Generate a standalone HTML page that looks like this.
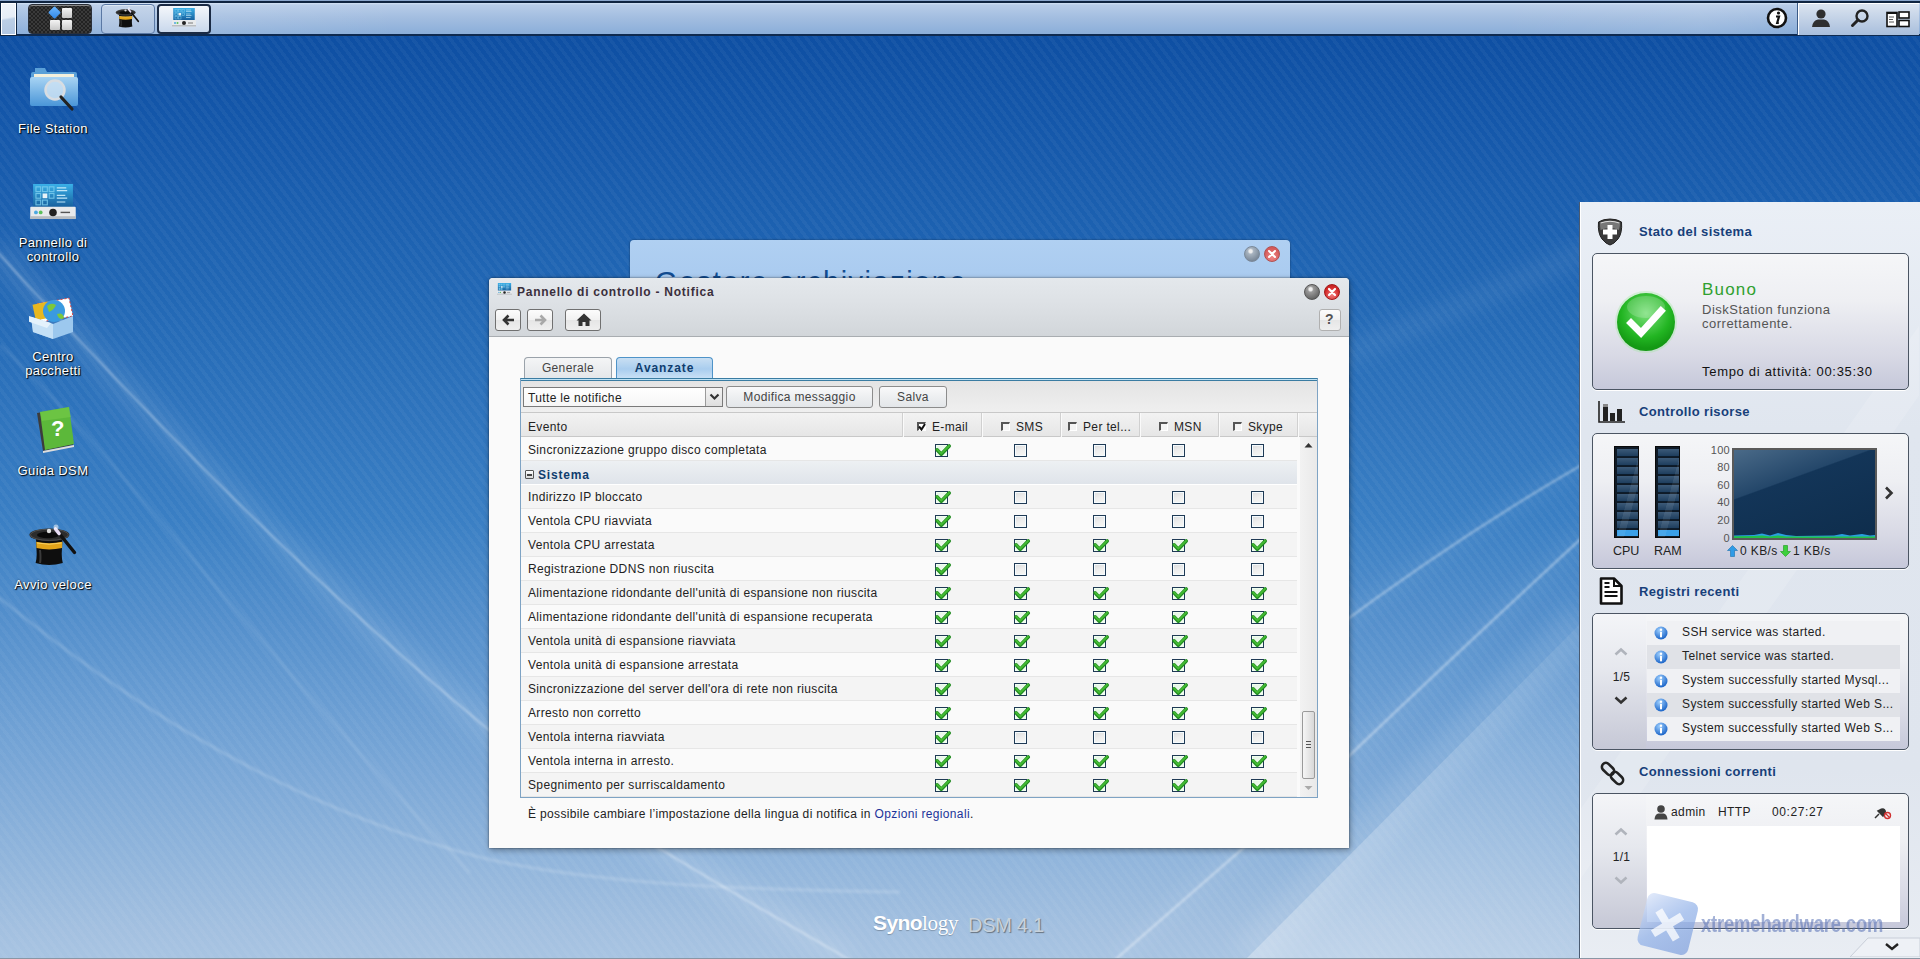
<!DOCTYPE html><html><head><meta charset="utf-8"><style>
*{box-sizing:border-box;margin:0;padding:0}
html,body{width:1920px;height:959px;overflow:hidden}
body{position:relative;font-family:"Liberation Sans",sans-serif;font-size:12px;color:#222;letter-spacing:.35px;
background:linear-gradient(180deg,#0e4fa3 36px,#1457aa 120px,#2268b5 300px,#3a7fc4 520px,#6b9ed3 710px,#a3c0e0 930px,#a8c4e2 959px);}
.a{position:absolute}
.t{position:absolute;white-space:nowrap;line-height:14px}
#stripes{position:absolute;left:0;top:0;width:1920px;height:959px;
background:repeating-linear-gradient(53deg,rgba(255,255,255,0) 0 4px,rgba(255,255,255,.04) 4px 7.5px);}
#topbar{position:absolute;left:0;top:0;width:1920px;height:36px;
background:linear-gradient(180deg,#8aa6cc 0,#8aa6cc 1px,#0f2440 1px,#0f2440 3px,#d2e1f4 3px,#b7cce8 5px,#a2bde0 18px,#8aaed9 34px,#0e2a50 34px,#0e2a50 36px)}
#tbshine{position:absolute;left:0;top:3px;width:1920px;height:31px;background:linear-gradient(90deg,rgba(255,255,255,0) 0,rgba(255,255,255,.12) 150px,rgba(255,255,255,0) 400px,rgba(255,255,255,0) 1500px,rgba(255,255,255,.08) 1700px,rgba(255,255,255,0) 1797px)}
.dlbl{position:absolute;width:120px;text-align:center;color:#fff;font-size:13px;line-height:14px;letter-spacing:.4px;text-shadow:1px 1px 1px #000,0 0 2px rgba(0,0,0,.6)}
.tb{position:absolute;top:31px;height:22px;border:1px solid #707070;border-radius:3px;background:linear-gradient(180deg,#fcfcfc 0%,#f1f1f1 50%,#e6e6e6 52%,#efefef 100%)}
.sbtn{position:absolute;top:5px;height:22px;border:1px solid #8c8c8c;border-radius:3px;background:linear-gradient(180deg,#f9f9fa 0%,#eceef0 55%,#e3e6e9 100%);text-align:center;color:#444;line-height:21px}
.row{position:absolute;left:0;width:776px;height:24px;border-bottom:1px solid #e6e6e6}
.r0{background:#f4f4f4}.r1{background:#fafafa}
.cb{position:absolute;top:6px;width:13px;height:13px;border:1px solid #1f3a55;box-shadow:inset 0 0 0 1px #f4fbff;background:linear-gradient(160deg,#dcdcdc,#eeeeee 50%,#f8f8f4)}
.ck{position:absolute;top:6px;width:13px;height:13px;border:1px solid #1f3a55;box-shadow:inset 0 0 0 1px #f0fff0;background:linear-gradient(160deg,#e4f4e4,#f6fff6)}
.ck svg{position:absolute;left:-1px;top:-1px;overflow:visible}
.hs{position:absolute;top:0;width:1px;height:24px;background:#d0d0d0;box-shadow:1px 0 0 #fafafa}
</style></head><body>
<div id="stripes"></div>
<div id="topbar">
<div id="tbshine"></div>
<div class="a" style="left:0;top:2px;width:17px;height:34px;border:1px solid #0f2440;background:#fff;padding:1px"><div style="width:100%;height:100%;background:linear-gradient(170deg,#eef3f9 0,#e6edf6 45%,#bccfe6 52%,#b0c6e2 100%)"></div></div>
</div>
<svg class="a" style="left:0;top:0" width="1920" height="959"><defs><linearGradient id="wedge" x1="0" y1="1" x2="1" y2="0"><stop offset="0" stop-color="#fff" stop-opacity=".30"/><stop offset=".55" stop-color="#fff" stop-opacity=".18"/><stop offset="1" stop-color="#fff" stop-opacity=".06"/></linearGradient><filter id="bl1" x="-10%" y="-10%" width="120%" height="120%"><feGaussianBlur stdDeviation="0.8"/></filter><filter id="bl6" x="-10%" y="-10%" width="120%" height="120%"><feGaussianBlur stdDeviation="10"/></filter></defs><path d="M-5 249.5 C 132 399, 296 570, 483 725 C 560 790, 640 840, 850 960" fill="none" stroke="#fff" stroke-opacity=".10" stroke-width="26" filter="url(#bl6)"/><path d="M-5 249.5 C 132 399, 296 570, 483 725 C 560 790, 640 840, 850 960" fill="none" stroke="#fff" stroke-opacity=".30" stroke-width="2.5" filter="url(#bl1)"/><path d="M-5 594 C 100 680, 260 800, 483 858 C 600 885, 750 890, 900 892" fill="none" stroke="#fff" stroke-opacity=".15" stroke-width="3.5" filter="url(#bl1)"/><path d="M0 345 C 108 445, 256 648, 470 873" fill="none" stroke="#fff" stroke-opacity=".08" stroke-width="4" filter="url(#bl1)"/><path d="M1246 959 L1585 619 L1585 959 Z" fill="url(#wedge)"/><path d="M1116 959 L1350 755 Q 1460 650, 1585 535" fill="none" stroke="#fff" stroke-opacity=".10" stroke-width="9" filter="url(#bl6)"/><path d="M1116 959 L1350 755 Q 1460 650, 1585 535" fill="none" stroke="#fff" stroke-opacity=".36" stroke-width="2.5" filter="url(#bl1)"/><path d="M1330 632 Q 1460 535, 1585 463" fill="none" stroke="#fff" stroke-opacity=".10" stroke-width="9" filter="url(#bl6)"/><path d="M1330 632 Q 1460 535, 1585 463" fill="none" stroke="#fff" stroke-opacity=".34" stroke-width="2.5" filter="url(#bl1)"/><path d="M1246 959 L1585 619" fill="none" stroke="#fff" stroke-opacity=".10" stroke-width="40" filter="url(#bl6)"/><path d="M1330 362 L1590 250" fill="none" stroke="#fff" stroke-opacity=".07" stroke-width="18" filter="url(#bl6)"/></svg>
<div class="a" style="left:28px;top:4px;width:64px;height:30px;border:1px solid #2a2f38;border-radius:4px;background:repeating-conic-gradient(#3a3a3a 0 25%,#222 0 50%) 0 0/4px 4px;box-shadow:inset 0 1px 0 #888"></div>
<div class="a" style="left:50px;top:8px;width:9px;height:9px;transform:rotate(45deg);background:linear-gradient(135deg,#6fb8ff,#2f86e6);border-radius:1px;left:50px;top:8px"></div>
<div class="a" style="left:62px;top:8px;width:10px;height:10px;border-radius:1px;background:linear-gradient(180deg,#f4f4f4,#c8c8c8)"></div>
<div class="a" style="left:50px;top:20px;width:10px;height:10px;border-radius:1px;background:linear-gradient(180deg,#f4f4f4,#c8c8c8)"></div>
<div class="a" style="left:62px;top:20px;width:10px;height:10px;border-radius:1px;background:linear-gradient(180deg,#f4f4f4,#c8c8c8)"></div>
<svg width="0" height="0" class="a"><defs><linearGradient id="cpg" x1="0" y1="0" x2="0" y2="1"><stop offset="0" stop-color="#3ab0e8"/><stop offset="1" stop-color="#145a98"/></linearGradient></defs></svg>
<div class="a" style="left:101px;top:4px;width:54px;height:30px;border:1px solid #5a78a4;border-radius:4px;background:linear-gradient(180deg,#c5d5ea,#a9c0df);box-shadow:inset 0 1px 0 #dde8f4"></div>
<svg class="a" style="left:115px;top:6px" width="25" height="22" viewBox="0 0 50 44"><path d="M8 17 L34.5 17 L33.8 30 Q33.5 36 34.8 41 Q21 45 7.6 41 Q9 36 8.6 30 Z" fill="#0e0e0e"/><path d="M12 28 Q13 36 12 41" stroke="#3a3a3a" stroke-width="2" fill="none"/><path d="M8.2 19.8 Q21 22.6 34.4 19.8 L34.1 26 Q21 28.8 8.5 26Z" fill="#e2a41a"/><path d="M9 21 Q21 23.5 33.5 21" stroke="#f8d060" stroke-width="1" fill="none"/><ellipse cx="21.4" cy="12.8" rx="20" ry="6.4" fill="#2c2c2c"/><ellipse cx="21.4" cy="12.8" rx="19" ry="5.6" fill="none" stroke="#555" stroke-width=".8"/><ellipse cx="20" cy="13" rx="11" ry="3.2" fill="#0a0a0a"/><path d="M28 7.5 L46.5 30.5" stroke="#111" stroke-width="3.4" stroke-linecap="round"/><path d="M27.5 7 L31 11.5" stroke="#e8dcf4" stroke-width="3.6" stroke-linecap="round"/><circle cx="21" cy="9" r="2.2" fill="#fff" opacity=".85"/><circle cx="28" cy="5" r="2.5" fill="#fff" opacity=".5"/></svg>
<div class="a" style="left:157px;top:4px;width:54px;height:30px;border:2px solid #1a2a44;border-radius:4px;background:linear-gradient(180deg,#f4f7fb,#c9d8ec)"></div>
<svg class="a" style="left:172px;top:8px" width="24" height="19" viewBox="0 0 48 38"><rect x="3" y="0" width="42" height="26" fill="#1f7ec0"/><rect x="3" y="0" width="42" height="26" fill="url(#cpg)"/><g fill="none" stroke="#7fd0f0" stroke-width="1.2" opacity=".8"><rect x="6" y="3" width="5" height="5"/><rect x="13" y="3" width="5" height="5"/><rect x="20" y="3" width="5" height="5"/><rect x="6" y="10" width="5" height="5"/><rect x="20" y="10" width="5" height="5"/><rect x="6" y="17" width="5" height="5"/><rect x="13" y="17" width="5" height="5"/></g><rect x="13" y="10" width="5" height="5" fill="#e8f4f8"/><g stroke="#bfe6f8" stroke-width="1.3"><path d="M28 4h10M28 7h11M28 12h9M28 15h11M28 19h9"/></g><rect x="0" y="24" width="48" height="13" rx="1" fill="#e8eaec"/><rect x="0" y="34" width="48" height="3" fill="#b8bcc0"/><circle cx="6" cy="30" r="2" fill="#4aa8e0"/><circle cx="11" cy="30" r="2" fill="#5cc05c"/><circle cx="24" cy="30" r="4" fill="#222"/><path d="M32 30h10" stroke="#555" stroke-width="1.5"/></svg>
<div class="a" style="left:1797px;top:3px;width:1px;height:32px;background:#3a5a86"></div>
<div class="a" style="left:1798px;top:3px;width:121px;height:32px;border-top:1px solid #fff;border-left:1px solid #fff;background:linear-gradient(180deg,#dbe4f0,#a8bedc)"></div>
<svg class="a" style="left:1766px;top:7px" width="22" height="22"><circle cx="11" cy="11" r="9" fill="#fff" stroke="#111" stroke-width="2.6"/><circle cx="12.5" cy="6" r="1.6" fill="#111"/><path d="M10 9.5h3l-1.8 6.5h1.6" fill="none" stroke="#111" stroke-width="2.2"/></svg>
<svg class="a" style="left:1811px;top:8px" width="20" height="20"><circle cx="10" cy="6" r="4.6" fill="#2f2f2f"/><path d="M1 19 Q2 12 7 11.5 L13 11.5 Q18 12 19 19Z" fill="#2f2f2f"/></svg>
<svg class="a" style="left:1850px;top:8px" width="20" height="20"><circle cx="12" cy="8" r="5.5" fill="none" stroke="#222" stroke-width="2.4"/><path d="M8 12L2.5 17.5" stroke="#222" stroke-width="3" stroke-linecap="round"/></svg>
<svg class="a" style="left:1886px;top:11px" width="24" height="17"><rect x="1" y="1.5" width="10" height="14" fill="#fff" stroke="#111" stroke-width="1.6"/><rect x="1" y="1" width="10" height="2" fill="#111"/><path d="M3 6h5M3 8.5h4M3 11h5" stroke="#555"/><rect x="13" y="1" width="10" height="6" fill="#fff" stroke="#111" stroke-width="1.6"/><rect x="13" y="9.5" width="10" height="6" fill="#fff" stroke="#111" stroke-width="1.6"/></svg>
<svg class="a" style="left:29px;top:66px" width="52" height="46" viewBox="0 0 52 46"><defs><linearGradient id="fold" x1="0" y1="0" x2="0" y2="1"><stop offset="0" stop-color="#a8d4f4"/><stop offset="1" stop-color="#4a96d8"/></linearGradient></defs><path d="M6 2h10l2 4h-12z" fill="#5aa0d8"/><rect x="2" y="6" width="46" height="10" rx="2" fill="#5aa0d8"/><rect x="5" y="8" width="40" height="6" fill="#f4f0dc"/><rect x="1" y="11" width="48" height="29" rx="2" fill="url(#fold)"/><circle cx="26" cy="24" r="9.5" fill="#cfe4f4" fill-opacity=".8" stroke="#d8dde2" stroke-width="2.5"/><path d="M32 31L43 43" stroke="#222" stroke-width="3.2" stroke-linecap="round"/></svg>
<div class="dlbl" style="left:-7px;top:122px">File Station</div>
<svg class="a" style="left:30px;top:184px" width="46" height="36" viewBox="0 0 48 38"><rect x="3" y="0" width="42" height="26" fill="#1f7ec0"/><rect x="3" y="0" width="42" height="26" fill="url(#cpg)"/><g fill="none" stroke="#7fd0f0" stroke-width="1.2" opacity=".8"><rect x="6" y="3" width="5" height="5"/><rect x="13" y="3" width="5" height="5"/><rect x="20" y="3" width="5" height="5"/><rect x="6" y="10" width="5" height="5"/><rect x="20" y="10" width="5" height="5"/><rect x="6" y="17" width="5" height="5"/><rect x="13" y="17" width="5" height="5"/></g><rect x="13" y="10" width="5" height="5" fill="#e8f4f8"/><g stroke="#bfe6f8" stroke-width="1.3"><path d="M28 4h10M28 7h11M28 12h9M28 15h11M28 19h9"/></g><rect x="0" y="24" width="48" height="13" rx="1" fill="#e8eaec"/><rect x="0" y="34" width="48" height="3" fill="#b8bcc0"/><circle cx="6" cy="30" r="2" fill="#4aa8e0"/><circle cx="11" cy="30" r="2" fill="#5cc05c"/><circle cx="24" cy="30" r="4" fill="#222"/><path d="M32 30h10" stroke="#555" stroke-width="1.5"/></svg>
<div class="dlbl" style="left:-7px;top:236px">Pannello di<br>controllo</div>
<svg class="a" style="left:29px;top:294px" width="48" height="46" viewBox="0 0 48 46"><path d="M8 10 L40 4 L44 22 L12 28Z" fill="#fff" stroke="#d44" stroke-width="1" stroke-dasharray="2 2"/><rect x="5" y="9" width="16" height="16" fill="#e8b820" transform="rotate(-12 13 17)"/><circle cx="25" cy="17" r="11" fill="#3a9ae0"/><path d="M18 12 Q22 8 27 11 Q25 16 20 18Z M28 20 Q34 18 35 24 Q30 27 28 20Z" fill="#7cc83c"/><path d="M2 23 L24 30 L44 22 L44 38 L24 45 L4 38Z" fill="#9cc8ee"/><path d="M2 23 L24 30 L24 45 L4 38Z" fill="#c4e0f6"/><path d="M0 22 L22 29 L18 34 L-2 27Z" fill="#e4f2fc"/></svg>
<div class="dlbl" style="left:-7px;top:350px">Centro<br>pacchetti</div>
<svg class="a" style="left:31px;top:407px" width="44" height="48" viewBox="0 0 44 48"><path d="M6 6 L36 1 L42 38 L12 44Z" fill="#3c3c3c"/><path d="M9 5 L38 0 L43 37 L14 43Z" fill="#5cb83a"/><path d="M9 5 L38 0 L40 10 L11 14Z" fill="#7cd04c" opacity=".5"/><path d="M12 44 L43 38 L43 40 L12 46Z" fill="#ddd"/><text x="27" y="29" font-family="Liberation Sans" font-weight="bold" font-size="22" fill="#fff" text-anchor="middle">?</text></svg>
<div class="dlbl" style="left:-7px;top:464px">Guida DSM</div>
<svg class="a" style="left:28px;top:522px" width="50" height="44" viewBox="0 0 50 44"><path d="M8 17 L34.5 17 L33.8 30 Q33.5 36 34.8 41 Q21 45 7.6 41 Q9 36 8.6 30 Z" fill="#0e0e0e"/><path d="M12 28 Q13 36 12 41" stroke="#3a3a3a" stroke-width="2" fill="none"/><path d="M8.2 19.8 Q21 22.6 34.4 19.8 L34.1 26 Q21 28.8 8.5 26Z" fill="#e2a41a"/><path d="M9 21 Q21 23.5 33.5 21" stroke="#f8d060" stroke-width="1" fill="none"/><ellipse cx="21.4" cy="12.8" rx="20" ry="6.4" fill="#2c2c2c"/><ellipse cx="21.4" cy="12.8" rx="19" ry="5.6" fill="none" stroke="#555" stroke-width=".8"/><ellipse cx="20" cy="13" rx="11" ry="3.2" fill="#0a0a0a"/><path d="M28 7.5 L46.5 30.5" stroke="#111" stroke-width="3.4" stroke-linecap="round"/><path d="M27.5 7 L31 11.5" stroke="#e8dcf4" stroke-width="3.6" stroke-linecap="round"/><circle cx="21" cy="9" r="2.2" fill="#fff" opacity=".85"/><circle cx="28" cy="5" r="2.5" fill="#fff" opacity=".5"/></svg>
<div class="dlbl" style="left:-7px;top:578px">Avvio veloce</div>
<div class="a" style="left:630px;top:240px;width:660px;height:60px;border-radius:4px 4px 0 0;background:linear-gradient(180deg,#b0d0f2,#a6c8ee);box-shadow:0 0 2px rgba(0,0,0,.5);overflow:hidden"><div class="t" style="left:25px;top:26px;font-size:29px;line-height:32px;color:#124c90;letter-spacing:1.5px">Gestore archiviazione</div><div class="a" style="left:614px;top:6px;width:16px;height:16px;border-radius:50%;background:radial-gradient(circle at 40% 30%,#eee 0 1.5px,#a8b4c0 3px,#7a8898 75%);border:1px solid #7a8898"></div><div class="a" style="left:634px;top:6px;width:16px;height:16px;border-radius:50%;background:radial-gradient(circle at 50% 70%,#e88,#d45a5a 70%);border:1px solid #b05050"></div><svg class="a" style="left:634px;top:6px" width="16" height="16"><path d="M5 5L11 11M11 5L5 11" stroke="#fff" stroke-width="2" stroke-linecap="round"/></svg></div>
<div class="a" style="left:489px;top:278px;width:860px;height:570px;border-radius:4px 4px 0 0;background:#fafafa;box-shadow:0 0 2px rgba(0,0,0,.6),1px 2px 6px rgba(0,0,0,.35)">
<div class="a" style="left:0;top:0;width:860px;height:59px;border-radius:4px 4px 0 0;background:linear-gradient(180deg,#e4e8ec 0%,#dde1e5 45%,#d2d6da 100%);border-bottom:1px solid #a9adb1"></div>
<svg class="a" style="left:8px;top:5px" width="15" height="12" viewBox="0 0 48 38"><rect x="3" y="0" width="42" height="26" fill="#1f7ec0"/><rect x="3" y="0" width="42" height="26" fill="url(#cpg)"/><g fill="none" stroke="#7fd0f0" stroke-width="1.2" opacity=".8"><rect x="6" y="3" width="5" height="5"/><rect x="13" y="3" width="5" height="5"/><rect x="20" y="3" width="5" height="5"/><rect x="6" y="10" width="5" height="5"/><rect x="20" y="10" width="5" height="5"/><rect x="6" y="17" width="5" height="5"/><rect x="13" y="17" width="5" height="5"/></g><rect x="13" y="10" width="5" height="5" fill="#e8f4f8"/><g stroke="#bfe6f8" stroke-width="1.3"><path d="M28 4h10M28 7h11M28 12h9M28 15h11M28 19h9"/></g><rect x="0" y="24" width="48" height="13" rx="1" fill="#e8eaec"/><rect x="0" y="34" width="48" height="3" fill="#b8bcc0"/><circle cx="6" cy="30" r="2" fill="#4aa8e0"/><circle cx="11" cy="30" r="2" fill="#5cc05c"/><circle cx="24" cy="30" r="4" fill="#222"/><path d="M32 30h10" stroke="#555" stroke-width="1.5"/></svg>
<div class="t" style="left:28px;top:7px;font-weight:bold;color:#3a2f3c;letter-spacing:.75px">Pannello di controllo - Notifica</div>
<div class="a" style="left:815px;top:6px;width:16px;height:16px;border-radius:50%;background:radial-gradient(circle at 40% 30%,#eee 0 1.5px,#9a9a9a 3px,#6b6b6b 70%,#444 100%);border:1px solid #555"></div>
<div class="a" style="left:835px;top:6px;width:16px;height:16px;border-radius:50%;background:radial-gradient(circle at 50% 70%,#f08080,#d42a2a 60%,#b81c1c);border:1px solid #a31818"></div>
<svg class="a" style="left:835px;top:6px" width="16" height="16"><path d="M5 5L11 11M11 5L5 11" stroke="#fff" stroke-width="2.2" stroke-linecap="round"/></svg>
<div class="tb" style="left:6px;width:26px"><svg class="a" style="left:5px;top:4px" width="14" height="12"><path d="M13 6H3M7.5 1.5L3 6L7.5 10.5" fill="none" stroke="#333" stroke-width="2.6"/></svg></div>
<div class="tb" style="left:38px;width:26px"><svg class="a" style="left:6px;top:4px" width="14" height="12"><path d="M1 6H11M6.5 1.5L11 6L6.5 10.5" fill="none" stroke="#a8a8a8" stroke-width="2.6"/></svg></div>
<div class="tb" style="left:76px;width:36px"><svg class="a" style="left:10px;top:3px" width="16" height="14"><path d="M8 0.5L0.5 7.5H2.5V13H6.5V9H9.5V13H13.5V7.5H15.5Z" fill="#333"/></svg></div>
<div class="tb" style="left:830px;width:22px;border-color:#b0b0b0"><div class="t" style="left:5px;top:2px;font-weight:bold;font-size:14px;color:#555">?</div></div>
<div class="a" style="left:35px;top:79px;width:88px;height:22px;border:1px solid #9aa2aa;border-bottom:none;border-radius:4px 4px 0 0;background:linear-gradient(180deg,#f4f5f6,#e3e6e9)"><div class="t" style="left:0;width:86px;text-align:center;top:3px;color:#444">Generale</div></div>
<div class="a" style="left:127px;top:79px;width:97px;height:23px;border:1px solid #4e93c8;border-bottom:none;border-radius:4px 4px 0 0;background:linear-gradient(180deg,#c9dff3 0%,#a9cdee 50%,#cfe4f7 100%)"><div class="t" style="left:0;width:95px;text-align:center;top:3px;color:#0f3d6e;font-weight:bold;letter-spacing:.9px">Avanzate</div></div>
<div class="a" style="left:31px;top:100px;width:798px;height:420px;border:1px solid #7ea3c4;border-top:1px solid #3a7ca2;background:#fafafa;box-shadow:inset 1px 0 0 #e4f2fb,inset -1px 0 0 #e4f2fb">
<div class="a" style="left:0;top:0;width:796px;height:2px;background:linear-gradient(180deg,#bfe3f6 0,#bfe3f6 1px,#3a7ca2 1px)"></div>
<div class="a" style="left:0;top:2px;width:796px;height:32px;background:linear-gradient(180deg,#e4e4e4,#efefef);border-bottom:1px solid #c8c8c8">
<div class="a" style="left:2px;top:6px;width:200px;height:20px;border:1px solid #7a7a7a;background:linear-gradient(180deg,#fff,#f6f6f6)"><div class="t" style="left:4px;top:3px;color:#222">Tutte le notifiche</div><div class="a" style="left:181px;top:0;width:17px;height:18px;border-left:1px solid #9a9a9a;background:linear-gradient(180deg,#f4f4f4,#dedede)"><svg class="a" style="left:3px;top:5px" width="11" height="8"><path d="M1.5 1.5L5.5 5.5L9.5 1.5" fill="none" stroke="#333" stroke-width="2.2"/></svg></div></div>
<div class="sbtn" style="left:205px;width:147px">Modifica messaggio</div>
<div class="sbtn" style="left:358px;width:68px">Salva</div>
</div>
<div class="a" style="left:0;top:34px;width:796px;height:24px;background:linear-gradient(180deg,#f2f2f2,#e6e6e6);border-bottom:1px solid #c8c8c8">
<div class="t" style="left:7px;top:6.5px;color:#222">Evento</div>
<div class="hs" style="left:381px"></div>
<div class="a" style="left:396px;top:9px;width:9px;height:9px;border-left:2px solid #555;border-top:2px solid #555;border-right:1px solid #fff;border-bottom:1px solid #fff;background:#fff"></div>
<svg class="a" style="left:397px;top:10px" width="8" height="8"><path d="M1 3.5L3.5 6.5L7 1" fill="none" stroke="#111" stroke-width="2"/></svg>
<div class="t" style="left:411px;top:6.5px;color:#222">E-mail</div>
<div class="hs" style="left:460px"></div>
<div class="a" style="left:480px;top:9px;width:9px;height:9px;border-left:2px solid #555;border-top:2px solid #555;border-right:1px solid #fff;border-bottom:1px solid #fff;background:#f4f4f4"></div>
<div class="t" style="left:495px;top:6.5px;color:#222">SMS</div>
<div class="hs" style="left:539px"></div>
<div class="a" style="left:547px;top:9px;width:9px;height:9px;border-left:2px solid #555;border-top:2px solid #555;border-right:1px solid #fff;border-bottom:1px solid #fff;background:#f4f4f4"></div>
<div class="t" style="left:562px;top:6.5px;color:#222">Per tel...</div>
<div class="hs" style="left:618px"></div>
<div class="a" style="left:638px;top:9px;width:9px;height:9px;border-left:2px solid #555;border-top:2px solid #555;border-right:1px solid #fff;border-bottom:1px solid #fff;background:#f4f4f4"></div>
<div class="t" style="left:653px;top:6.5px;color:#222">MSN</div>
<div class="hs" style="left:697px"></div>
<div class="a" style="left:712px;top:9px;width:9px;height:9px;border-left:2px solid #555;border-top:2px solid #555;border-right:1px solid #fff;border-bottom:1px solid #fff;background:#f4f4f4"></div>
<div class="t" style="left:727px;top:6.5px;color:#222">Skype</div>
<div class="hs" style="left:776px"></div>
</div>
<div class="a" style="left:0;top:58px;width:796px;height:360px;overflow:hidden">
<div class="row r1" style="top:0px"><div class="t" style="left:7px;top:5.5px">Sincronizzazione gruppo disco completata</div>
<div class="ck" style="left:414px;top:7px"><svg width="16" height="13" viewBox="0 0 16 13"><path d="M2 5.8 L6.3 10.2 L14.2 2" fill="none" stroke="#1f8a1f" stroke-width="3.6" stroke-linecap="round" stroke-linejoin="round"/><path d="M2.3 5.6 L6.3 9.6 L14 1.9" fill="none" stroke="#44bb33" stroke-width="2" stroke-linecap="round" stroke-linejoin="round"/></svg></div>
<div class="cb" style="left:493px;top:7px"></div>
<div class="cb" style="left:572px;top:7px"></div>
<div class="cb" style="left:651px;top:7px"></div>
<div class="cb" style="left:730px;top:7px"></div>
</div>
<div class="row" style="top:24px;background:linear-gradient(180deg,#edf0f3,#dfe4ea);border-bottom:1px solid #fff"><div class="a" style="left:4px;top:9px;width:9px;height:9px;border:1px solid #555;border-radius:1px;background:linear-gradient(180deg,#fff,#d8d8d8)"><div class="a" style="left:1px;top:3px;width:5px;height:2px;background:#444"></div></div><div class="t" style="left:17px;top:6.5px;font-weight:bold;color:#0f3d6e;letter-spacing:.8px">Sistema</div></div>
<div class="row r0" style="top:48px"><div class="t" style="left:7px;top:4.5px">Indirizzo IP bloccato</div>
<div class="ck" style="left:414px;top:6px"><svg width="16" height="13" viewBox="0 0 16 13"><path d="M2 5.8 L6.3 10.2 L14.2 2" fill="none" stroke="#1f8a1f" stroke-width="3.6" stroke-linecap="round" stroke-linejoin="round"/><path d="M2.3 5.6 L6.3 9.6 L14 1.9" fill="none" stroke="#44bb33" stroke-width="2" stroke-linecap="round" stroke-linejoin="round"/></svg></div>
<div class="cb" style="left:493px;top:6px"></div>
<div class="cb" style="left:572px;top:6px"></div>
<div class="cb" style="left:651px;top:6px"></div>
<div class="cb" style="left:730px;top:6px"></div>
</div>
<div class="row r1" style="top:72px"><div class="t" style="left:7px;top:4.5px">Ventola CPU riavviata</div>
<div class="ck" style="left:414px;top:6px"><svg width="16" height="13" viewBox="0 0 16 13"><path d="M2 5.8 L6.3 10.2 L14.2 2" fill="none" stroke="#1f8a1f" stroke-width="3.6" stroke-linecap="round" stroke-linejoin="round"/><path d="M2.3 5.6 L6.3 9.6 L14 1.9" fill="none" stroke="#44bb33" stroke-width="2" stroke-linecap="round" stroke-linejoin="round"/></svg></div>
<div class="cb" style="left:493px;top:6px"></div>
<div class="cb" style="left:572px;top:6px"></div>
<div class="cb" style="left:651px;top:6px"></div>
<div class="cb" style="left:730px;top:6px"></div>
</div>
<div class="row r0" style="top:96px"><div class="t" style="left:7px;top:4.5px">Ventola CPU arrestata</div>
<div class="ck" style="left:414px;top:6px"><svg width="16" height="13" viewBox="0 0 16 13"><path d="M2 5.8 L6.3 10.2 L14.2 2" fill="none" stroke="#1f8a1f" stroke-width="3.6" stroke-linecap="round" stroke-linejoin="round"/><path d="M2.3 5.6 L6.3 9.6 L14 1.9" fill="none" stroke="#44bb33" stroke-width="2" stroke-linecap="round" stroke-linejoin="round"/></svg></div>
<div class="ck" style="left:493px;top:6px"><svg width="16" height="13" viewBox="0 0 16 13"><path d="M2 5.8 L6.3 10.2 L14.2 2" fill="none" stroke="#1f8a1f" stroke-width="3.6" stroke-linecap="round" stroke-linejoin="round"/><path d="M2.3 5.6 L6.3 9.6 L14 1.9" fill="none" stroke="#44bb33" stroke-width="2" stroke-linecap="round" stroke-linejoin="round"/></svg></div>
<div class="ck" style="left:572px;top:6px"><svg width="16" height="13" viewBox="0 0 16 13"><path d="M2 5.8 L6.3 10.2 L14.2 2" fill="none" stroke="#1f8a1f" stroke-width="3.6" stroke-linecap="round" stroke-linejoin="round"/><path d="M2.3 5.6 L6.3 9.6 L14 1.9" fill="none" stroke="#44bb33" stroke-width="2" stroke-linecap="round" stroke-linejoin="round"/></svg></div>
<div class="ck" style="left:651px;top:6px"><svg width="16" height="13" viewBox="0 0 16 13"><path d="M2 5.8 L6.3 10.2 L14.2 2" fill="none" stroke="#1f8a1f" stroke-width="3.6" stroke-linecap="round" stroke-linejoin="round"/><path d="M2.3 5.6 L6.3 9.6 L14 1.9" fill="none" stroke="#44bb33" stroke-width="2" stroke-linecap="round" stroke-linejoin="round"/></svg></div>
<div class="ck" style="left:730px;top:6px"><svg width="16" height="13" viewBox="0 0 16 13"><path d="M2 5.8 L6.3 10.2 L14.2 2" fill="none" stroke="#1f8a1f" stroke-width="3.6" stroke-linecap="round" stroke-linejoin="round"/><path d="M2.3 5.6 L6.3 9.6 L14 1.9" fill="none" stroke="#44bb33" stroke-width="2" stroke-linecap="round" stroke-linejoin="round"/></svg></div>
</div>
<div class="row r1" style="top:120px"><div class="t" style="left:7px;top:4.5px">Registrazione DDNS non riuscita</div>
<div class="ck" style="left:414px;top:6px"><svg width="16" height="13" viewBox="0 0 16 13"><path d="M2 5.8 L6.3 10.2 L14.2 2" fill="none" stroke="#1f8a1f" stroke-width="3.6" stroke-linecap="round" stroke-linejoin="round"/><path d="M2.3 5.6 L6.3 9.6 L14 1.9" fill="none" stroke="#44bb33" stroke-width="2" stroke-linecap="round" stroke-linejoin="round"/></svg></div>
<div class="cb" style="left:493px;top:6px"></div>
<div class="cb" style="left:572px;top:6px"></div>
<div class="cb" style="left:651px;top:6px"></div>
<div class="cb" style="left:730px;top:6px"></div>
</div>
<div class="row r0" style="top:144px"><div class="t" style="left:7px;top:4.5px">Alimentazione ridondante dell'unità di espansione non riuscita</div>
<div class="ck" style="left:414px;top:6px"><svg width="16" height="13" viewBox="0 0 16 13"><path d="M2 5.8 L6.3 10.2 L14.2 2" fill="none" stroke="#1f8a1f" stroke-width="3.6" stroke-linecap="round" stroke-linejoin="round"/><path d="M2.3 5.6 L6.3 9.6 L14 1.9" fill="none" stroke="#44bb33" stroke-width="2" stroke-linecap="round" stroke-linejoin="round"/></svg></div>
<div class="ck" style="left:493px;top:6px"><svg width="16" height="13" viewBox="0 0 16 13"><path d="M2 5.8 L6.3 10.2 L14.2 2" fill="none" stroke="#1f8a1f" stroke-width="3.6" stroke-linecap="round" stroke-linejoin="round"/><path d="M2.3 5.6 L6.3 9.6 L14 1.9" fill="none" stroke="#44bb33" stroke-width="2" stroke-linecap="round" stroke-linejoin="round"/></svg></div>
<div class="ck" style="left:572px;top:6px"><svg width="16" height="13" viewBox="0 0 16 13"><path d="M2 5.8 L6.3 10.2 L14.2 2" fill="none" stroke="#1f8a1f" stroke-width="3.6" stroke-linecap="round" stroke-linejoin="round"/><path d="M2.3 5.6 L6.3 9.6 L14 1.9" fill="none" stroke="#44bb33" stroke-width="2" stroke-linecap="round" stroke-linejoin="round"/></svg></div>
<div class="ck" style="left:651px;top:6px"><svg width="16" height="13" viewBox="0 0 16 13"><path d="M2 5.8 L6.3 10.2 L14.2 2" fill="none" stroke="#1f8a1f" stroke-width="3.6" stroke-linecap="round" stroke-linejoin="round"/><path d="M2.3 5.6 L6.3 9.6 L14 1.9" fill="none" stroke="#44bb33" stroke-width="2" stroke-linecap="round" stroke-linejoin="round"/></svg></div>
<div class="ck" style="left:730px;top:6px"><svg width="16" height="13" viewBox="0 0 16 13"><path d="M2 5.8 L6.3 10.2 L14.2 2" fill="none" stroke="#1f8a1f" stroke-width="3.6" stroke-linecap="round" stroke-linejoin="round"/><path d="M2.3 5.6 L6.3 9.6 L14 1.9" fill="none" stroke="#44bb33" stroke-width="2" stroke-linecap="round" stroke-linejoin="round"/></svg></div>
</div>
<div class="row r1" style="top:168px"><div class="t" style="left:7px;top:4.5px">Alimentazione ridondante dell'unità di espansione recuperata</div>
<div class="ck" style="left:414px;top:6px"><svg width="16" height="13" viewBox="0 0 16 13"><path d="M2 5.8 L6.3 10.2 L14.2 2" fill="none" stroke="#1f8a1f" stroke-width="3.6" stroke-linecap="round" stroke-linejoin="round"/><path d="M2.3 5.6 L6.3 9.6 L14 1.9" fill="none" stroke="#44bb33" stroke-width="2" stroke-linecap="round" stroke-linejoin="round"/></svg></div>
<div class="ck" style="left:493px;top:6px"><svg width="16" height="13" viewBox="0 0 16 13"><path d="M2 5.8 L6.3 10.2 L14.2 2" fill="none" stroke="#1f8a1f" stroke-width="3.6" stroke-linecap="round" stroke-linejoin="round"/><path d="M2.3 5.6 L6.3 9.6 L14 1.9" fill="none" stroke="#44bb33" stroke-width="2" stroke-linecap="round" stroke-linejoin="round"/></svg></div>
<div class="ck" style="left:572px;top:6px"><svg width="16" height="13" viewBox="0 0 16 13"><path d="M2 5.8 L6.3 10.2 L14.2 2" fill="none" stroke="#1f8a1f" stroke-width="3.6" stroke-linecap="round" stroke-linejoin="round"/><path d="M2.3 5.6 L6.3 9.6 L14 1.9" fill="none" stroke="#44bb33" stroke-width="2" stroke-linecap="round" stroke-linejoin="round"/></svg></div>
<div class="ck" style="left:651px;top:6px"><svg width="16" height="13" viewBox="0 0 16 13"><path d="M2 5.8 L6.3 10.2 L14.2 2" fill="none" stroke="#1f8a1f" stroke-width="3.6" stroke-linecap="round" stroke-linejoin="round"/><path d="M2.3 5.6 L6.3 9.6 L14 1.9" fill="none" stroke="#44bb33" stroke-width="2" stroke-linecap="round" stroke-linejoin="round"/></svg></div>
<div class="ck" style="left:730px;top:6px"><svg width="16" height="13" viewBox="0 0 16 13"><path d="M2 5.8 L6.3 10.2 L14.2 2" fill="none" stroke="#1f8a1f" stroke-width="3.6" stroke-linecap="round" stroke-linejoin="round"/><path d="M2.3 5.6 L6.3 9.6 L14 1.9" fill="none" stroke="#44bb33" stroke-width="2" stroke-linecap="round" stroke-linejoin="round"/></svg></div>
</div>
<div class="row r0" style="top:192px"><div class="t" style="left:7px;top:4.5px">Ventola unità di espansione riavviata</div>
<div class="ck" style="left:414px;top:6px"><svg width="16" height="13" viewBox="0 0 16 13"><path d="M2 5.8 L6.3 10.2 L14.2 2" fill="none" stroke="#1f8a1f" stroke-width="3.6" stroke-linecap="round" stroke-linejoin="round"/><path d="M2.3 5.6 L6.3 9.6 L14 1.9" fill="none" stroke="#44bb33" stroke-width="2" stroke-linecap="round" stroke-linejoin="round"/></svg></div>
<div class="ck" style="left:493px;top:6px"><svg width="16" height="13" viewBox="0 0 16 13"><path d="M2 5.8 L6.3 10.2 L14.2 2" fill="none" stroke="#1f8a1f" stroke-width="3.6" stroke-linecap="round" stroke-linejoin="round"/><path d="M2.3 5.6 L6.3 9.6 L14 1.9" fill="none" stroke="#44bb33" stroke-width="2" stroke-linecap="round" stroke-linejoin="round"/></svg></div>
<div class="ck" style="left:572px;top:6px"><svg width="16" height="13" viewBox="0 0 16 13"><path d="M2 5.8 L6.3 10.2 L14.2 2" fill="none" stroke="#1f8a1f" stroke-width="3.6" stroke-linecap="round" stroke-linejoin="round"/><path d="M2.3 5.6 L6.3 9.6 L14 1.9" fill="none" stroke="#44bb33" stroke-width="2" stroke-linecap="round" stroke-linejoin="round"/></svg></div>
<div class="ck" style="left:651px;top:6px"><svg width="16" height="13" viewBox="0 0 16 13"><path d="M2 5.8 L6.3 10.2 L14.2 2" fill="none" stroke="#1f8a1f" stroke-width="3.6" stroke-linecap="round" stroke-linejoin="round"/><path d="M2.3 5.6 L6.3 9.6 L14 1.9" fill="none" stroke="#44bb33" stroke-width="2" stroke-linecap="round" stroke-linejoin="round"/></svg></div>
<div class="ck" style="left:730px;top:6px"><svg width="16" height="13" viewBox="0 0 16 13"><path d="M2 5.8 L6.3 10.2 L14.2 2" fill="none" stroke="#1f8a1f" stroke-width="3.6" stroke-linecap="round" stroke-linejoin="round"/><path d="M2.3 5.6 L6.3 9.6 L14 1.9" fill="none" stroke="#44bb33" stroke-width="2" stroke-linecap="round" stroke-linejoin="round"/></svg></div>
</div>
<div class="row r1" style="top:216px"><div class="t" style="left:7px;top:4.5px">Ventola unità di espansione arrestata</div>
<div class="ck" style="left:414px;top:6px"><svg width="16" height="13" viewBox="0 0 16 13"><path d="M2 5.8 L6.3 10.2 L14.2 2" fill="none" stroke="#1f8a1f" stroke-width="3.6" stroke-linecap="round" stroke-linejoin="round"/><path d="M2.3 5.6 L6.3 9.6 L14 1.9" fill="none" stroke="#44bb33" stroke-width="2" stroke-linecap="round" stroke-linejoin="round"/></svg></div>
<div class="ck" style="left:493px;top:6px"><svg width="16" height="13" viewBox="0 0 16 13"><path d="M2 5.8 L6.3 10.2 L14.2 2" fill="none" stroke="#1f8a1f" stroke-width="3.6" stroke-linecap="round" stroke-linejoin="round"/><path d="M2.3 5.6 L6.3 9.6 L14 1.9" fill="none" stroke="#44bb33" stroke-width="2" stroke-linecap="round" stroke-linejoin="round"/></svg></div>
<div class="ck" style="left:572px;top:6px"><svg width="16" height="13" viewBox="0 0 16 13"><path d="M2 5.8 L6.3 10.2 L14.2 2" fill="none" stroke="#1f8a1f" stroke-width="3.6" stroke-linecap="round" stroke-linejoin="round"/><path d="M2.3 5.6 L6.3 9.6 L14 1.9" fill="none" stroke="#44bb33" stroke-width="2" stroke-linecap="round" stroke-linejoin="round"/></svg></div>
<div class="ck" style="left:651px;top:6px"><svg width="16" height="13" viewBox="0 0 16 13"><path d="M2 5.8 L6.3 10.2 L14.2 2" fill="none" stroke="#1f8a1f" stroke-width="3.6" stroke-linecap="round" stroke-linejoin="round"/><path d="M2.3 5.6 L6.3 9.6 L14 1.9" fill="none" stroke="#44bb33" stroke-width="2" stroke-linecap="round" stroke-linejoin="round"/></svg></div>
<div class="ck" style="left:730px;top:6px"><svg width="16" height="13" viewBox="0 0 16 13"><path d="M2 5.8 L6.3 10.2 L14.2 2" fill="none" stroke="#1f8a1f" stroke-width="3.6" stroke-linecap="round" stroke-linejoin="round"/><path d="M2.3 5.6 L6.3 9.6 L14 1.9" fill="none" stroke="#44bb33" stroke-width="2" stroke-linecap="round" stroke-linejoin="round"/></svg></div>
</div>
<div class="row r0" style="top:240px"><div class="t" style="left:7px;top:4.5px">Sincronizzazione del server dell'ora di rete non riuscita</div>
<div class="ck" style="left:414px;top:6px"><svg width="16" height="13" viewBox="0 0 16 13"><path d="M2 5.8 L6.3 10.2 L14.2 2" fill="none" stroke="#1f8a1f" stroke-width="3.6" stroke-linecap="round" stroke-linejoin="round"/><path d="M2.3 5.6 L6.3 9.6 L14 1.9" fill="none" stroke="#44bb33" stroke-width="2" stroke-linecap="round" stroke-linejoin="round"/></svg></div>
<div class="ck" style="left:493px;top:6px"><svg width="16" height="13" viewBox="0 0 16 13"><path d="M2 5.8 L6.3 10.2 L14.2 2" fill="none" stroke="#1f8a1f" stroke-width="3.6" stroke-linecap="round" stroke-linejoin="round"/><path d="M2.3 5.6 L6.3 9.6 L14 1.9" fill="none" stroke="#44bb33" stroke-width="2" stroke-linecap="round" stroke-linejoin="round"/></svg></div>
<div class="ck" style="left:572px;top:6px"><svg width="16" height="13" viewBox="0 0 16 13"><path d="M2 5.8 L6.3 10.2 L14.2 2" fill="none" stroke="#1f8a1f" stroke-width="3.6" stroke-linecap="round" stroke-linejoin="round"/><path d="M2.3 5.6 L6.3 9.6 L14 1.9" fill="none" stroke="#44bb33" stroke-width="2" stroke-linecap="round" stroke-linejoin="round"/></svg></div>
<div class="ck" style="left:651px;top:6px"><svg width="16" height="13" viewBox="0 0 16 13"><path d="M2 5.8 L6.3 10.2 L14.2 2" fill="none" stroke="#1f8a1f" stroke-width="3.6" stroke-linecap="round" stroke-linejoin="round"/><path d="M2.3 5.6 L6.3 9.6 L14 1.9" fill="none" stroke="#44bb33" stroke-width="2" stroke-linecap="round" stroke-linejoin="round"/></svg></div>
<div class="ck" style="left:730px;top:6px"><svg width="16" height="13" viewBox="0 0 16 13"><path d="M2 5.8 L6.3 10.2 L14.2 2" fill="none" stroke="#1f8a1f" stroke-width="3.6" stroke-linecap="round" stroke-linejoin="round"/><path d="M2.3 5.6 L6.3 9.6 L14 1.9" fill="none" stroke="#44bb33" stroke-width="2" stroke-linecap="round" stroke-linejoin="round"/></svg></div>
</div>
<div class="row r1" style="top:264px"><div class="t" style="left:7px;top:4.5px">Arresto non corretto</div>
<div class="ck" style="left:414px;top:6px"><svg width="16" height="13" viewBox="0 0 16 13"><path d="M2 5.8 L6.3 10.2 L14.2 2" fill="none" stroke="#1f8a1f" stroke-width="3.6" stroke-linecap="round" stroke-linejoin="round"/><path d="M2.3 5.6 L6.3 9.6 L14 1.9" fill="none" stroke="#44bb33" stroke-width="2" stroke-linecap="round" stroke-linejoin="round"/></svg></div>
<div class="ck" style="left:493px;top:6px"><svg width="16" height="13" viewBox="0 0 16 13"><path d="M2 5.8 L6.3 10.2 L14.2 2" fill="none" stroke="#1f8a1f" stroke-width="3.6" stroke-linecap="round" stroke-linejoin="round"/><path d="M2.3 5.6 L6.3 9.6 L14 1.9" fill="none" stroke="#44bb33" stroke-width="2" stroke-linecap="round" stroke-linejoin="round"/></svg></div>
<div class="ck" style="left:572px;top:6px"><svg width="16" height="13" viewBox="0 0 16 13"><path d="M2 5.8 L6.3 10.2 L14.2 2" fill="none" stroke="#1f8a1f" stroke-width="3.6" stroke-linecap="round" stroke-linejoin="round"/><path d="M2.3 5.6 L6.3 9.6 L14 1.9" fill="none" stroke="#44bb33" stroke-width="2" stroke-linecap="round" stroke-linejoin="round"/></svg></div>
<div class="ck" style="left:651px;top:6px"><svg width="16" height="13" viewBox="0 0 16 13"><path d="M2 5.8 L6.3 10.2 L14.2 2" fill="none" stroke="#1f8a1f" stroke-width="3.6" stroke-linecap="round" stroke-linejoin="round"/><path d="M2.3 5.6 L6.3 9.6 L14 1.9" fill="none" stroke="#44bb33" stroke-width="2" stroke-linecap="round" stroke-linejoin="round"/></svg></div>
<div class="ck" style="left:730px;top:6px"><svg width="16" height="13" viewBox="0 0 16 13"><path d="M2 5.8 L6.3 10.2 L14.2 2" fill="none" stroke="#1f8a1f" stroke-width="3.6" stroke-linecap="round" stroke-linejoin="round"/><path d="M2.3 5.6 L6.3 9.6 L14 1.9" fill="none" stroke="#44bb33" stroke-width="2" stroke-linecap="round" stroke-linejoin="round"/></svg></div>
</div>
<div class="row r0" style="top:288px"><div class="t" style="left:7px;top:4.5px">Ventola interna riavviata</div>
<div class="ck" style="left:414px;top:6px"><svg width="16" height="13" viewBox="0 0 16 13"><path d="M2 5.8 L6.3 10.2 L14.2 2" fill="none" stroke="#1f8a1f" stroke-width="3.6" stroke-linecap="round" stroke-linejoin="round"/><path d="M2.3 5.6 L6.3 9.6 L14 1.9" fill="none" stroke="#44bb33" stroke-width="2" stroke-linecap="round" stroke-linejoin="round"/></svg></div>
<div class="cb" style="left:493px;top:6px"></div>
<div class="cb" style="left:572px;top:6px"></div>
<div class="cb" style="left:651px;top:6px"></div>
<div class="cb" style="left:730px;top:6px"></div>
</div>
<div class="row r1" style="top:312px"><div class="t" style="left:7px;top:4.5px">Ventola interna in arresto.</div>
<div class="ck" style="left:414px;top:6px"><svg width="16" height="13" viewBox="0 0 16 13"><path d="M2 5.8 L6.3 10.2 L14.2 2" fill="none" stroke="#1f8a1f" stroke-width="3.6" stroke-linecap="round" stroke-linejoin="round"/><path d="M2.3 5.6 L6.3 9.6 L14 1.9" fill="none" stroke="#44bb33" stroke-width="2" stroke-linecap="round" stroke-linejoin="round"/></svg></div>
<div class="ck" style="left:493px;top:6px"><svg width="16" height="13" viewBox="0 0 16 13"><path d="M2 5.8 L6.3 10.2 L14.2 2" fill="none" stroke="#1f8a1f" stroke-width="3.6" stroke-linecap="round" stroke-linejoin="round"/><path d="M2.3 5.6 L6.3 9.6 L14 1.9" fill="none" stroke="#44bb33" stroke-width="2" stroke-linecap="round" stroke-linejoin="round"/></svg></div>
<div class="ck" style="left:572px;top:6px"><svg width="16" height="13" viewBox="0 0 16 13"><path d="M2 5.8 L6.3 10.2 L14.2 2" fill="none" stroke="#1f8a1f" stroke-width="3.6" stroke-linecap="round" stroke-linejoin="round"/><path d="M2.3 5.6 L6.3 9.6 L14 1.9" fill="none" stroke="#44bb33" stroke-width="2" stroke-linecap="round" stroke-linejoin="round"/></svg></div>
<div class="ck" style="left:651px;top:6px"><svg width="16" height="13" viewBox="0 0 16 13"><path d="M2 5.8 L6.3 10.2 L14.2 2" fill="none" stroke="#1f8a1f" stroke-width="3.6" stroke-linecap="round" stroke-linejoin="round"/><path d="M2.3 5.6 L6.3 9.6 L14 1.9" fill="none" stroke="#44bb33" stroke-width="2" stroke-linecap="round" stroke-linejoin="round"/></svg></div>
<div class="ck" style="left:730px;top:6px"><svg width="16" height="13" viewBox="0 0 16 13"><path d="M2 5.8 L6.3 10.2 L14.2 2" fill="none" stroke="#1f8a1f" stroke-width="3.6" stroke-linecap="round" stroke-linejoin="round"/><path d="M2.3 5.6 L6.3 9.6 L14 1.9" fill="none" stroke="#44bb33" stroke-width="2" stroke-linecap="round" stroke-linejoin="round"/></svg></div>
</div>
<div class="row r0" style="top:336px"><div class="t" style="left:7px;top:4.5px">Spegnimento per surriscaldamento</div>
<div class="ck" style="left:414px;top:6px"><svg width="16" height="13" viewBox="0 0 16 13"><path d="M2 5.8 L6.3 10.2 L14.2 2" fill="none" stroke="#1f8a1f" stroke-width="3.6" stroke-linecap="round" stroke-linejoin="round"/><path d="M2.3 5.6 L6.3 9.6 L14 1.9" fill="none" stroke="#44bb33" stroke-width="2" stroke-linecap="round" stroke-linejoin="round"/></svg></div>
<div class="ck" style="left:493px;top:6px"><svg width="16" height="13" viewBox="0 0 16 13"><path d="M2 5.8 L6.3 10.2 L14.2 2" fill="none" stroke="#1f8a1f" stroke-width="3.6" stroke-linecap="round" stroke-linejoin="round"/><path d="M2.3 5.6 L6.3 9.6 L14 1.9" fill="none" stroke="#44bb33" stroke-width="2" stroke-linecap="round" stroke-linejoin="round"/></svg></div>
<div class="ck" style="left:572px;top:6px"><svg width="16" height="13" viewBox="0 0 16 13"><path d="M2 5.8 L6.3 10.2 L14.2 2" fill="none" stroke="#1f8a1f" stroke-width="3.6" stroke-linecap="round" stroke-linejoin="round"/><path d="M2.3 5.6 L6.3 9.6 L14 1.9" fill="none" stroke="#44bb33" stroke-width="2" stroke-linecap="round" stroke-linejoin="round"/></svg></div>
<div class="ck" style="left:651px;top:6px"><svg width="16" height="13" viewBox="0 0 16 13"><path d="M2 5.8 L6.3 10.2 L14.2 2" fill="none" stroke="#1f8a1f" stroke-width="3.6" stroke-linecap="round" stroke-linejoin="round"/><path d="M2.3 5.6 L6.3 9.6 L14 1.9" fill="none" stroke="#44bb33" stroke-width="2" stroke-linecap="round" stroke-linejoin="round"/></svg></div>
<div class="ck" style="left:730px;top:6px"><svg width="16" height="13" viewBox="0 0 16 13"><path d="M2 5.8 L6.3 10.2 L14.2 2" fill="none" stroke="#1f8a1f" stroke-width="3.6" stroke-linecap="round" stroke-linejoin="round"/><path d="M2.3 5.6 L6.3 9.6 L14 1.9" fill="none" stroke="#44bb33" stroke-width="2" stroke-linecap="round" stroke-linejoin="round"/></svg></div>
</div>
</div>
<div class="a" style="left:779px;top:58px;width:17px;height:360px;background:linear-gradient(90deg,#f2f2f2,#e9e9e9)">
<svg class="a" style="left:4px;top:5px" width="9" height="6"><path d="M0.5 5.5L4.5 1L8.5 5.5Z" fill="#333"/></svg>
<div class="a" style="left:2px;top:274px;width:13px;height:68px;border:1px solid #9a9a9a;border-radius:2px;background:linear-gradient(90deg,#f6f6f6,#d8d8d8)"><div class="a" style="left:3px;top:29px;width:5px;height:7px;border-top:1px solid #555;border-bottom:1px solid #555"><div class="a" style="left:0;top:2px;width:5px;height:1px;background:#555"></div></div></div>
<svg class="a" style="left:4px;top:348px" width="9" height="6"><path d="M0.5 1L4.5 5L8.5 1Z" fill="#aaa"/></svg>
</div>
</div>
<div class="t" style="left:39px;top:529px;color:#222">È possibile cambiare l’impostazione della lingua di notifica in <span style="color:#1c3399">Opzioni regionali</span>.</div>
</div>
<div class="a" style="left:1580px;top:202px;width:340px;height:757px;background:linear-gradient(180deg,#eaeff6 0%,#e0e6ef 30%,#dfe5ee 75%,#e9edf3 100%);box-shadow:inset 1px 0 0 #fff,-1px 0 0 #4a5a70">
<div class="a" style="left:0;top:0;width:339px;height:757px;overflow:hidden"><div class="a" style="left:150px;top:-100px;width:40px;height:1000px;transform:rotate(35deg);background:rgba(255,255,255,.15)"></div></div>
<div class="t" style="left:59px;top:22px;font-size:13px;line-height:16px;font-weight:bold;color:#173f7a;letter-spacing:.36px">Stato del sistema</div>
<svg class="a" style="left:17px;top:16px" width="26" height="28" viewBox="0 0 26 28"><path d="M13 1 Q20 1 24.5 4 Q25.5 15 21 21 Q17 26 13 27 Q9 26 5 21 Q0.5 15 1.5 4 Q6 1 13 1Z" fill="#3a3a3a" stroke="#222"/><path d="M13 3 Q19 3 23 5.5 Q23 8 22 12 Q13 8 3.5 12 Q3 8 3 5.5 Q7 3 13 3Z" fill="#777"/><path d="M3.5 5 Q13 1.5 22.5 5" fill="none" stroke="#ddd" stroke-width="1.2"/><path d="M10.5 7h5v4.5h4.5v5h-4.5v4.5h-5v-4.5h-4.5v-5h4.5z" fill="#fff"/></svg>
<div class="a" style="left:12px;top:51px;width:317px;height:137px;border:1px solid #4b5563;border-radius:5px;background:linear-gradient(180deg,#f5f6f8 0%,#eeeff3 35%,#d8d9e5 75%,#c6c8da 100%);box-shadow:0 1px 0 #fff"></div>
<svg class="a" style="left:33px;top:87px" width="66" height="66" viewBox="0 0 66 66"><defs><radialGradient id="gball" cx=".5" cy=".35" r=".6"><stop offset="0" stop-color="#7ae07a"/><stop offset=".7" stop-color="#22b522"/><stop offset="1" stop-color="#149914"/></radialGradient></defs><circle cx="33" cy="33" r="31" fill="#9ee89e" opacity=".35"/><circle cx="33" cy="33" r="29" fill="url(#gball)"/><ellipse cx="33" cy="18" rx="19" ry="11" fill="#fff" opacity=".18"/><path d="M18 34 L28 44 L48 22" fill="none" stroke="#fff" stroke-width="7" stroke-linecap="square"/></svg>
<div class="t" style="left:122px;top:77.5px;font-size:17px;line-height:20px;color:#2fa02f;letter-spacing:1.2px">Buono</div>
<div class="t" style="left:122px;top:100.5px;font-size:13px;line-height:14px;color:#555;letter-spacing:.5px">DiskStation funziona<br>correttamente.</div>
<div class="t" style="left:122px;top:162px;font-size:13px;line-height:16px;color:#111;letter-spacing:.7px">Tempo di attività: 00:35:30</div>
<div class="t" style="left:59px;top:202px;font-size:13px;line-height:16px;font-weight:bold;color:#173f7a;letter-spacing:.36px">Controllo risorse</div>
<svg class="a" style="left:18px;top:199px" width="28" height="22" viewBox="0 0 28 22"><path d="M1 0V21H27" fill="none" stroke="#222" stroke-width="1.6"/><rect x="5" y="3" width="5" height="17" fill="#222"/><rect x="12" y="12" width="5" height="8" fill="#222"/><rect x="19" y="8" width="5" height="12" fill="#222"/><path d="M5 3h5v3H5z" fill="#888"/></svg>
<div class="a" style="left:12px;top:231px;width:317px;height:136px;border:1px solid #4b5563;border-radius:5px;background:linear-gradient(180deg,#f5f6f8 0%,#eeeff3 35%,#d8d9e5 75%,#c6c8da 100%);box-shadow:0 1px 0 #fff"></div>
<div class="a" style="left:34px;top:244px;width:25px;height:92px;background:#0f1a26;border:1px solid #0a0a0a"><div class="a" style="left:2px;top:2px;width:21px;height:8px;background:linear-gradient(180deg,#3c5a78,#1e3e5e);border-bottom:1px solid #0c1c2c"></div><div class="a" style="left:2px;top:11px;width:21px;height:8px;background:linear-gradient(180deg,#3c5a78,#1e3e5e);border-bottom:1px solid #0c1c2c"></div><div class="a" style="left:2px;top:20px;width:21px;height:8px;background:linear-gradient(180deg,#3c5a78,#1e3e5e);border-bottom:1px solid #0c1c2c"></div><div class="a" style="left:2px;top:29px;width:21px;height:8px;background:linear-gradient(180deg,#3c5a78,#1e3e5e);border-bottom:1px solid #0c1c2c"></div><div class="a" style="left:2px;top:38px;width:21px;height:8px;background:linear-gradient(180deg,#3c5a78,#1e3e5e);border-bottom:1px solid #0c1c2c"></div><div class="a" style="left:2px;top:47px;width:21px;height:8px;background:linear-gradient(180deg,#3c5a78,#1e3e5e);border-bottom:1px solid #0c1c2c"></div><div class="a" style="left:2px;top:56px;width:21px;height:8px;background:linear-gradient(180deg,#3c5a78,#1e3e5e);border-bottom:1px solid #0c1c2c"></div><div class="a" style="left:2px;top:65px;width:21px;height:8px;background:linear-gradient(180deg,#3c5a78,#1e3e5e);border-bottom:1px solid #0c1c2c"></div><div class="a" style="left:2px;top:74px;width:21px;height:8px;background:linear-gradient(180deg,#3c5a78,#1e3e5e);border-bottom:1px solid #0c1c2c"></div><div class="a" style="left:2px;top:83px;width:21px;height:6px;background:#3aa0e8"></div><div class="a" style="left:0;top:0;width:23px;height:90px;background:linear-gradient(105deg,rgba(255,255,255,0) 55%,rgba(255,255,255,.08) 56%,rgba(255,255,255,.08) 70%,rgba(255,255,255,0) 71%)"></div></div>
<div class="a" style="left:75px;top:244px;width:25px;height:92px;background:#0f1a26;border:1px solid #0a0a0a"><div class="a" style="left:2px;top:2px;width:21px;height:8px;background:linear-gradient(180deg,#3c5a78,#1e3e5e);border-bottom:1px solid #0c1c2c"></div><div class="a" style="left:2px;top:11px;width:21px;height:8px;background:linear-gradient(180deg,#3c5a78,#1e3e5e);border-bottom:1px solid #0c1c2c"></div><div class="a" style="left:2px;top:20px;width:21px;height:8px;background:linear-gradient(180deg,#3c5a78,#1e3e5e);border-bottom:1px solid #0c1c2c"></div><div class="a" style="left:2px;top:29px;width:21px;height:8px;background:linear-gradient(180deg,#3c5a78,#1e3e5e);border-bottom:1px solid #0c1c2c"></div><div class="a" style="left:2px;top:38px;width:21px;height:8px;background:linear-gradient(180deg,#3c5a78,#1e3e5e);border-bottom:1px solid #0c1c2c"></div><div class="a" style="left:2px;top:47px;width:21px;height:8px;background:linear-gradient(180deg,#3c5a78,#1e3e5e);border-bottom:1px solid #0c1c2c"></div><div class="a" style="left:2px;top:56px;width:21px;height:8px;background:linear-gradient(180deg,#3c5a78,#1e3e5e);border-bottom:1px solid #0c1c2c"></div><div class="a" style="left:2px;top:65px;width:21px;height:8px;background:linear-gradient(180deg,#3c5a78,#1e3e5e);border-bottom:1px solid #0c1c2c"></div><div class="a" style="left:2px;top:74px;width:21px;height:8px;background:linear-gradient(180deg,#3c5a78,#1e3e5e);border-bottom:1px solid #0c1c2c"></div><div class="a" style="left:2px;top:83px;width:21px;height:6px;background:#3aa0e8"></div><div class="a" style="left:0;top:0;width:23px;height:90px;background:linear-gradient(105deg,rgba(255,255,255,0) 55%,rgba(255,255,255,.08) 56%,rgba(255,255,255,.08) 70%,rgba(255,255,255,0) 71%)"></div></div>
<div class="t" style="left:33px;top:342px;font-size:12.5px;line-height:14px;color:#222;letter-spacing:0">CPU</div>
<div class="t" style="left:74px;top:342px;font-size:12.5px;line-height:14px;color:#222;letter-spacing:0">RAM</div>
<div class="t" style="left:110px;width:40px;text-align:right;top:242px;font-size:11px;line-height:12px;color:#555;letter-spacing:.3px">100</div>
<div class="t" style="left:110px;width:40px;text-align:right;top:259px;font-size:11px;line-height:12px;color:#555;letter-spacing:.3px">80</div>
<div class="t" style="left:110px;width:40px;text-align:right;top:277px;font-size:11px;line-height:12px;color:#555;letter-spacing:.3px">60</div>
<div class="t" style="left:110px;width:40px;text-align:right;top:294px;font-size:11px;line-height:12px;color:#555;letter-spacing:.3px">40</div>
<div class="t" style="left:110px;width:40px;text-align:right;top:312px;font-size:11px;line-height:12px;color:#555;letter-spacing:.3px">20</div>
<div class="t" style="left:110px;width:40px;text-align:right;top:330px;font-size:11px;line-height:12px;color:#555;letter-spacing:.3px">0</div>
<div class="a" style="left:152px;top:246px;width:145px;height:92px;border:2px solid #5a5a5a;background:linear-gradient(160deg,#4a6a88 0%,#24476a 35%,#133558 36%,#0e2d4c 100%)"><svg class="a" style="left:0;top:78px" width="141" height="10"><path d="M0 7.5 L20 7 L28 5.5 L36 7.5 L44 5 L52 7 L62 8 L100 7.5 L108 6 L116 7.5 L128 6 L136 7.5 L141 7 V10 H0Z" fill="#2aa0e0"/><path d="M0 8.3 L20 8 L28 7.5 L36 8.5 L44 7.5 L52 8.5 L141 8.5 V10 H0Z" fill="#22c04a"/></svg></div>
<svg class="a" style="left:304px;top:284px" width="10" height="14"><path d="M2 1.5L7.5 7L2 12.5" fill="none" stroke="#333" stroke-width="2.6"/></svg>
<svg class="a" style="left:147px;top:343px" width="11" height="12"><path d="M5.5 0.5L10.5 5.5H7.5V11.5H3.5V5.5H0.5Z" fill="#2f9be6" stroke="#1a70b0" stroke-width=".6"/></svg>
<div class="t" style="left:160px;top:342px;font-size:12px;line-height:14px;color:#222;letter-spacing:.4px">0 KB/s</div>
<svg class="a" style="left:200px;top:343px" width="11" height="12"><path d="M5.5 11.5L10.5 6.5H7.5V0.5H3.5V6.5H0.5Z" fill="#3cd03c" stroke="#1a9a1a" stroke-width=".6"/></svg>
<div class="t" style="left:213px;top:342px;font-size:12px;line-height:14px;color:#222;letter-spacing:.4px">1 KB/s</div>
<div class="t" style="left:59px;top:382px;font-size:13px;line-height:16px;font-weight:bold;color:#173f7a;letter-spacing:.36px">Registri recenti</div>
<svg class="a" style="left:19px;top:375px" width="24" height="28" viewBox="0 0 24 28"><path d="M2 1.5H15L22.5 9V26.5H2Z" fill="#fff" stroke="#111" stroke-width="2.6" stroke-linejoin="round"/><path d="M15 1.5V9H22.5" fill="none" stroke="#111" stroke-width="2"/><path d="M5.5 6h5M5.5 10h5M5.5 15h13M5.5 19h13" stroke="#111" stroke-width="2"/></svg>
<div class="a" style="left:12px;top:411px;width:317px;height:137px;border:1px solid #4b5563;border-radius:5px;background:linear-gradient(180deg,#f5f6f8 0%,#eeeff3 35%,#d8d9e5 75%,#c6c8da 100%);box-shadow:0 1px 0 #fff"></div>
<div class="a" style="left:13px;top:412px;width:53px;height:135px;border-radius:5px 0 0 5px;background:linear-gradient(180deg,#f4f5f8 0%,#e6e8ee 40%,#c6c8d6 100%)"></div>
<div class="a" style="left:67px;top:419px;width:253px;height:24px;background:#f0f1f4"><svg class="a" style="left:7px;top:5px" width="14" height="14"><defs><radialGradient id="ig" cx=".4" cy=".3" r=".7"><stop offset="0" stop-color="#9fd0ff"/><stop offset="1" stop-color="#1a64c8"/></radialGradient></defs><circle cx="7" cy="7" r="6.5" fill="url(#ig)"/><circle cx="7" cy="3.8" r="1.2" fill="#fff"/><rect x="6" y="5.8" width="2" height="5.5" fill="#fff"/></svg><div class="t" style="left:35px;top:4px;color:#222;letter-spacing:.4px">SSH service was started.</div></div>
<div class="a" style="left:67px;top:443px;width:253px;height:24px;background:#e0e2e7"><svg class="a" style="left:7px;top:5px" width="14" height="14"><defs><radialGradient id="ig" cx=".4" cy=".3" r=".7"><stop offset="0" stop-color="#9fd0ff"/><stop offset="1" stop-color="#1a64c8"/></radialGradient></defs><circle cx="7" cy="7" r="6.5" fill="url(#ig)"/><circle cx="7" cy="3.8" r="1.2" fill="#fff"/><rect x="6" y="5.8" width="2" height="5.5" fill="#fff"/></svg><div class="t" style="left:35px;top:4px;color:#222;letter-spacing:.4px">Telnet service was started.</div></div>
<div class="a" style="left:67px;top:467px;width:253px;height:24px;background:#f0f1f4"><svg class="a" style="left:7px;top:5px" width="14" height="14"><defs><radialGradient id="ig" cx=".4" cy=".3" r=".7"><stop offset="0" stop-color="#9fd0ff"/><stop offset="1" stop-color="#1a64c8"/></radialGradient></defs><circle cx="7" cy="7" r="6.5" fill="url(#ig)"/><circle cx="7" cy="3.8" r="1.2" fill="#fff"/><rect x="6" y="5.8" width="2" height="5.5" fill="#fff"/></svg><div class="t" style="left:35px;top:4px;color:#222;letter-spacing:.4px">System successfully started Mysql...</div></div>
<div class="a" style="left:67px;top:491px;width:253px;height:24px;background:#e0e2e7"><svg class="a" style="left:7px;top:5px" width="14" height="14"><defs><radialGradient id="ig" cx=".4" cy=".3" r=".7"><stop offset="0" stop-color="#9fd0ff"/><stop offset="1" stop-color="#1a64c8"/></radialGradient></defs><circle cx="7" cy="7" r="6.5" fill="url(#ig)"/><circle cx="7" cy="3.8" r="1.2" fill="#fff"/><rect x="6" y="5.8" width="2" height="5.5" fill="#fff"/></svg><div class="t" style="left:35px;top:4px;color:#222;letter-spacing:.4px">System successfully started Web S...</div></div>
<div class="a" style="left:67px;top:515px;width:253px;height:24px;background:#f0f1f4"><svg class="a" style="left:7px;top:5px" width="14" height="14"><defs><radialGradient id="ig" cx=".4" cy=".3" r=".7"><stop offset="0" stop-color="#9fd0ff"/><stop offset="1" stop-color="#1a64c8"/></radialGradient></defs><circle cx="7" cy="7" r="6.5" fill="url(#ig)"/><circle cx="7" cy="3.8" r="1.2" fill="#fff"/><rect x="6" y="5.8" width="2" height="5.5" fill="#fff"/></svg><div class="t" style="left:35px;top:4px;color:#222;letter-spacing:.4px">System successfully started Web S...</div></div>
<svg class="a" style="left:34px;top:445px" width="14" height="9"><path d="M1.5 7.5L7 2.5L12.5 7.5" fill="none" stroke="#b0b4bc" stroke-width="2.6"/></svg>
<div class="t" style="left:25px;width:33px;text-align:center;top:468px;color:#222;letter-spacing:.3px">1/5</div>
<svg class="a" style="left:34px;top:494px" width="14" height="9"><path d="M1.5 1.5L7 6.5L12.5 1.5" fill="none" stroke="#333" stroke-width="2.6"/></svg>
<div class="t" style="left:59px;top:562px;font-size:13px;line-height:16px;font-weight:bold;color:#173f7a;letter-spacing:.36px">Connessioni correnti</div>
<svg class="a" style="left:19px;top:558px" width="28" height="28" viewBox="0 0 28 28"><g fill="none" stroke="#222" stroke-width="2.6"><rect x="5" y="2" width="8" height="14" rx="4" transform="rotate(-45 9 9)"/><rect x="14" y="11" width="8" height="14" rx="4" transform="rotate(-45 18 18)"/></g></svg>
<div class="a" style="left:12px;top:591px;width:317px;height:136px;border:1px solid #4b5563;border-radius:5px;background:linear-gradient(180deg,#f5f6f8 0%,#eeeff3 35%,#d8d9e5 75%,#c6c8da 100%);box-shadow:0 1px 0 #fff"></div>
<div class="a" style="left:13px;top:592px;width:53px;height:134px;border-radius:5px 0 0 5px;background:linear-gradient(180deg,#f4f5f8 0%,#e6e8ee 40%,#c6c8d6 100%)"></div>
<div class="a" style="left:67px;top:624px;width:253px;height:96px;background:#fff"></div>
<svg class="a" style="left:74px;top:602px" width="14" height="16"><circle cx="7" cy="5" r="3.8" fill="#444"/><path d="M0.5 15.5 Q1 10 4.5 9.5 H9.5 Q13 10 13.5 15.5Z" fill="#444"/></svg>
<div class="t" style="left:91px;top:603px;color:#222;letter-spacing:.4px">admin</div>
<div class="t" style="left:138px;top:603px;color:#222;letter-spacing:.4px">HTTP</div>
<div class="t" style="left:192px;top:603px;color:#222;letter-spacing:.6px">00:27:27</div>
<svg class="a" style="left:294px;top:604px" width="18" height="14"><path d="M1 12 L5 8 M4 5 L9 10 L11 7 Q12 4 9 3 Q7 3 6 4Z" fill="#333" stroke="#333" stroke-width="1.5"/><circle cx="13.5" cy="9.5" r="3" fill="none" stroke="#d03030" stroke-width="1.4"/><path d="M11.5 7.5L15.5 11.5" stroke="#d03030" stroke-width="1.2"/></svg>
<svg class="a" style="left:34px;top:625px" width="14" height="9"><path d="M1.5 7.5L7 2.5L12.5 7.5" fill="none" stroke="#b0b4bc" stroke-width="2.6"/></svg>
<div class="t" style="left:25px;width:33px;text-align:center;top:648px;color:#222;letter-spacing:.3px">1/1</div>
<svg class="a" style="left:34px;top:674px" width="14" height="9"><path d="M1.5 1.5L7 6.5L12.5 1.5" fill="none" stroke="#b0b4bc" stroke-width="2.6"/></svg>
<svg class="a" style="left:270px;top:735px" width="70" height="20"><path d="M0 20 L18 1 H70 V20Z" fill="#eef1f6" stroke="#c8ced8"/><path d="M36 7L42 12L48 7" fill="none" stroke="#222" stroke-width="2.4"/></svg>
</div>
<div class="t" style="left:873px;top:911px;font-size:21px;line-height:24px;font-weight:bold;color:#fff;letter-spacing:-.6px;text-shadow:0 1px 1px rgba(0,0,0,.25)">Syno<span style="font-family:&quot;Liberation Serif&quot;,serif;font-weight:normal;letter-spacing:-.3px">logy</span></div>
<div class="t" style="left:968px;top:913px;font-size:20px;line-height:24px;color:#c8d2dc;letter-spacing:-.3px;text-shadow:1px 1px 1px rgba(60,60,60,.6)">DSM 4.1</div>
<svg class="a" style="left:1630px;top:885px" width="290" height="74" viewBox="0 0 290 74"><defs><linearGradient id="wmg" x1="0" y1="0" x2="1" y2="1"><stop offset="0" stop-color="#dfe8fa" stop-opacity=".85"/><stop offset=".5" stop-color="#8fb0e8" stop-opacity=".7"/><stop offset="1" stop-color="#6a90d8" stop-opacity=".6"/></linearGradient></defs><g transform="rotate(14 38 38)"><rect x="12" y="12" width="52" height="54" rx="7" fill="url(#wmg)"/><path d="M26 28L50 52M50 28L26 52" stroke="#fff" stroke-opacity=".75" stroke-width="8"/></g></svg>
<div class="t" style="left:1701px;top:911px;font-size:23px;line-height:26px;font-weight:bold;color:rgba(85,112,180,.55);letter-spacing:-.2px;transform:scaleX(.80);transform-origin:0 0">xtremehardware.com</div>
<div class="a" style="left:0;top:958px;width:1920px;height:1px;background:#8a96a4"></div>
</body></html>
